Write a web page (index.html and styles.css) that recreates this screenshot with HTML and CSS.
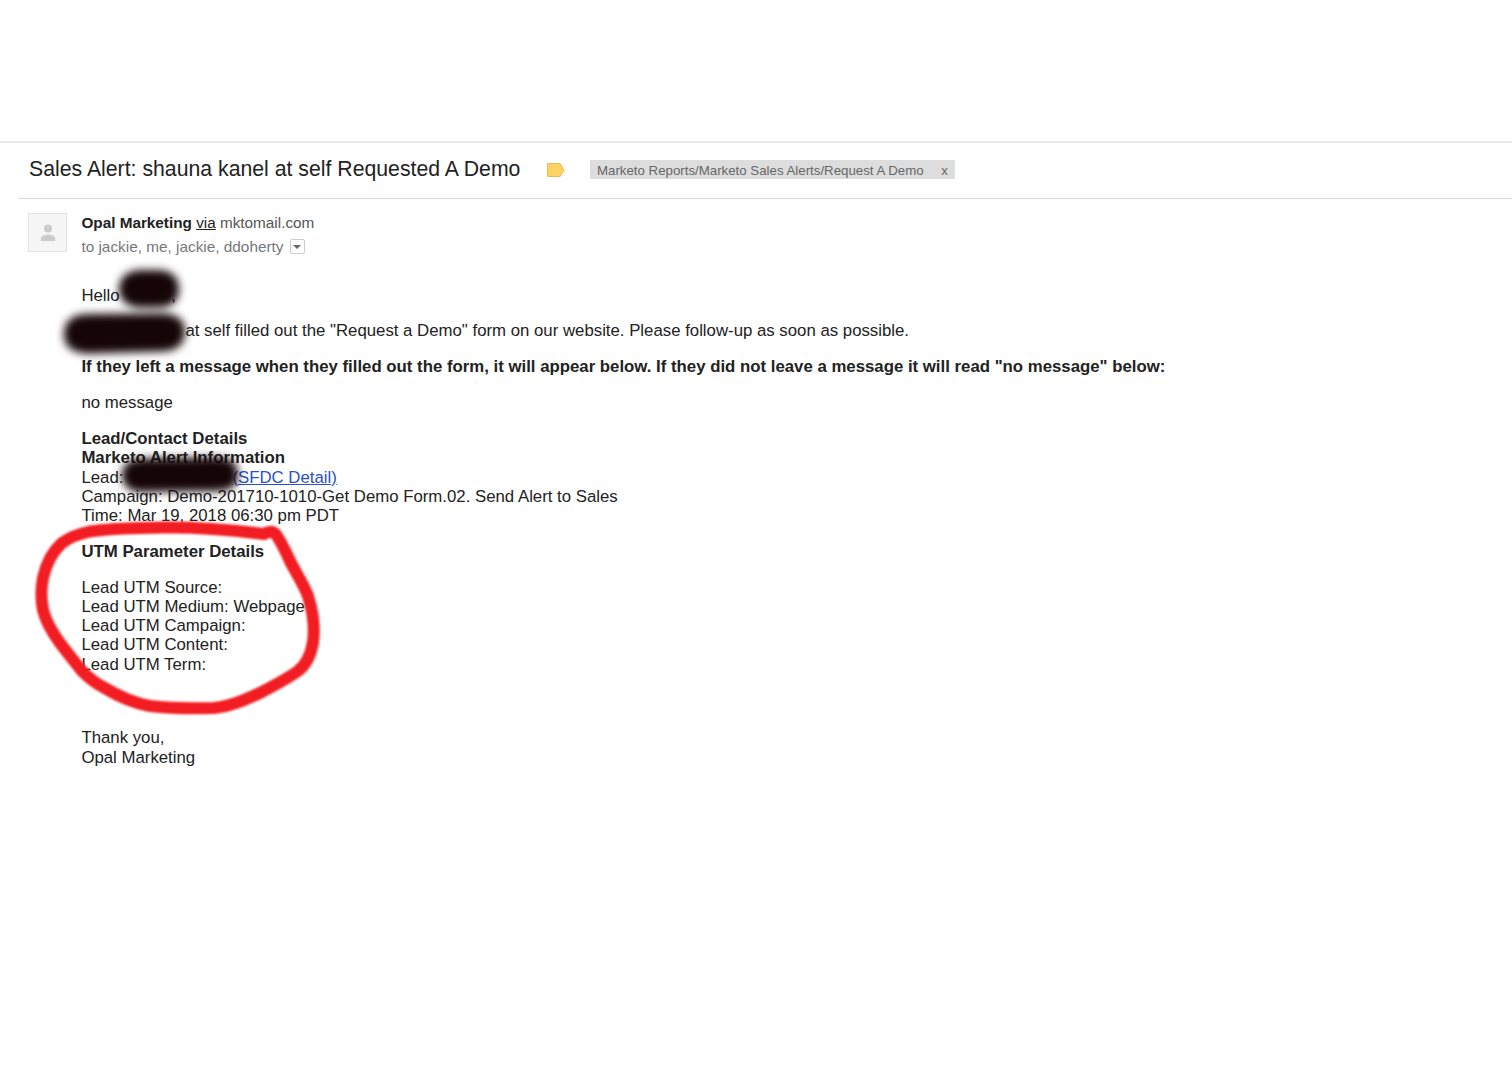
FILE: index.html
```html
<!DOCTYPE html>
<html lang="en">
<head>
    <meta charset="UTF-8">
    <meta name="viewport" content="width=device-width, initial-scale=1.0">
    <title>Sales Alert</title>
    <link rel="stylesheet" href="styles.css">
</head>
<body>
    <div class="mail">
        <!-- Subject line and label -->
        <div class="subject">
            <h1>Sales Alert: shauna kanel at self Requested A Demo</h1>
            <svg class="marker" width="18" height="14" viewBox="0 0 18 14">
                <path d="M.5 .5H13.2L17 7l-3.8 6.5H.5z" fill="#fdd264" stroke="#e8bd55"/>
            </svg>
            <div class="label">
                <span class="label-name">Marketo Reports/Marketo Sales Alerts/Request A Demo</span>
                <span class="label-close">x</span>
            </div>
        </div>

        <div class="message">
            <div class="avatar">
                <svg width="16" height="18" viewBox="0 0 16 18">
                    <circle cx="8" cy="4.6" r="4" fill="#cbcbcb"/>
                    <path d="M.8 17v-2C.8 12.200 4 10.700 8 10.700s7.200 1.500 7.200 4.300v2z" fill="#cbcbcb"/>
                </svg>
            </div>
            <div class="content">
                <div class="from"><b>Opal Marketing</b> <span class="via">via</span> <span class="domain">mktomail.com</span></div>
                <div class="to">
                    <span>to jackie, me, jackie, ddoherty</span>
                    <span class="dropdown"></span>
                </div>

                <div class="text">
                    <p>Hello <span class="gap gap-hello"></span>,</p>
                    <p><span class="gap gap-name"></span>at self filled out the "Request a Demo" form on our website. Please follow-up as soon as possible.</p>
                    <p><b>If they left a message when they filled out the form, it will appear below. If they did not leave a message it will read "no message" below:</b></p>
                    <p>no message</p>
                    <p>
                        <b>Lead/Contact Details</b><br>
                        <b>Marketo Alert Information</b><br>
                        Lead:<span class="gap gap-lead"></span><a href="#">(SFDC Detail)</a><br>
                        Campaign: Demo-201710-1010-Get Demo Form.02. Send Alert to Sales<br>
                        Time: Mar 19, 2018 06:30 pm PDT
                    </p>
                    <p><b>UTM Parameter Details</b></p>
                    <p>
                        Lead UTM Source:<br>
                        Lead UTM Medium: Webpage<br>
                        Lead UTM Campaign:<br>
                        Lead UTM Content:<br>
                        Lead UTM Term:
                    </p>
                    <p class="sign">Thank you,<br>Opal Marketing</p>
                </div>
            </div>
        </div>
    </div>

    <!-- Brush marks over the mail -->
    <svg class="marks" width="360" height="740" viewBox="0 0 360 740">
        <defs>
            <filter id="soft" x="-30%" y="-60%" width="160%" height="220%" color-interpolation-filters="sRGB">
                <feGaussianBlur stdDeviation="4"/>
            </filter>
            <filter id="edge" color-interpolation-filters="sRGB">
                <feGaussianBlur stdDeviation="0.8"/>
            </filter>
        </defs>
        <g class="blot" filter="url(#soft)">
            <path d="M119 289C119 276 130 270 141 270L158 270C170 270 179 276 179 289S170 307.500 158 307.500L141 307.500C130 307.500 119 302 119 289z"/>
            <path d="M64 334C64 320 74 314.500 88 314L162 313.500C177 313.500 185 320 185 331.500S178 351 162 351.500L90 353.500C74 353.500 64 348 64 334z"/>
            <path d="M122 475C122 464 130 459 142 458.500L218 457.500C231 457.500 238 463 238 474S232 490.500 219 491L142 492C130 492 122 486 122 475z"/>
        </g>
        <path class="circle" filter="url(#edge)" d="M264 534C232 530 200 527 163 527.500C135 528 110 528 90 531.500C78 534 70 537 62 543C52 552 46 564 43 578C41 588 41 600 43 610C46 622 52 632 60 643C66 651 74 661 82 671C88 677 95 683 103 687C118 696 132 703 150 706C172 708.500 196 708.500 214 708C232 706 247 699 262 692C275 685 287 679 298 671C307 664 311 655 313 642C315 628 313 612 308 596C303 583 296 573 290 561C286 552 281 542 276 534.500C273 531 269 531 264 534z"/>
    </svg>
</body>
</html>
```
FILE: styles.css
```css
* {
    box-sizing: border-box;
}
body {
    margin: 0;
    padding-top: 141px;
    background: #fff;
    color: #222;
    font-family: "Liberation Sans", Arial, sans-serif;
    font-size: 16.8px;
    line-height: 19.2px;
    position: relative;
    overflow: hidden;
    height: 1080px;
}
.mail {
    border-top: 2px solid #ebebeb;
}
.subject {
    display: flex;
    align-items: center;
    height: 56px;
    margin-left: 19px;
    padding: 0 0 2px 10px;
    border-bottom: 1px solid #d8d8d8;
}
.subject h1 {
    margin: 0;
    width: 518px;
    padding-bottom: 2px;
    font-size: 21.25px;
    font-weight: normal;
    line-height: 28px;
    white-space: nowrap;
}
.marker {
    flex: none;
    margin-right: 25px;
}
.label {
    display: flex;
    width: 365px;
    height: 19px;
    padding: 0 7px;
    justify-content: space-between;
    background: #ddd;
    color: #666;
    font-size: 13.28px;
    line-height: 21px;
    white-space: nowrap;
}
.message {
    display: flex;
    padding: 14px 0 0 28px;
}
.avatar {
    display: flex;
    align-items: center;
    justify-content: center;
    width: 39px;
    height: 39px;
    margin-right: 14.4px;
    background: #f5f5f5;
    border: 1px solid #e3e3e3;
}
.content {
    white-space: nowrap;
}
.from {
    font-size: 15.3px;
}
.via {
    text-decoration: underline;
}
.domain {
    color: #555;
}
.to {
    display: flex;
    align-items: center;
    margin-top: 5px;
    color: #777;
    font-size: 15.35px;
}
.dropdown {
    display: flex;
    align-items: center;
    justify-content: center;
    width: 15px;
    height: 15px;
    margin-left: 6px;
    border: 1px solid #ccc;
    border-radius: 2px;
}
.dropdown::after {
    content: "";
    border: 4px solid transparent;
    border-top-color: #666;
    border-bottom: 0;
}
.text {
    padding-top: 29.2px;
}
.text p {
    margin: 0 0 16.7px;
}
.text a {
    color: #2a50c8;
}
.gap {
    display: inline-block;
}
.gap-hello {
    width: 47px;
}
.gap-name {
    width: 104px;
}
.gap-lead {
    width: 109px;
}
.text .sign {
    padding-top: 38px;
}
.marks {
    position: absolute;
    top: 0;
    left: 0;
}
.blot {
    fill: #150507;
}
.circle {
    fill: none;
    stroke: #f21d22;
    stroke-width: 12;
    stroke-linejoin: round;
}
```
